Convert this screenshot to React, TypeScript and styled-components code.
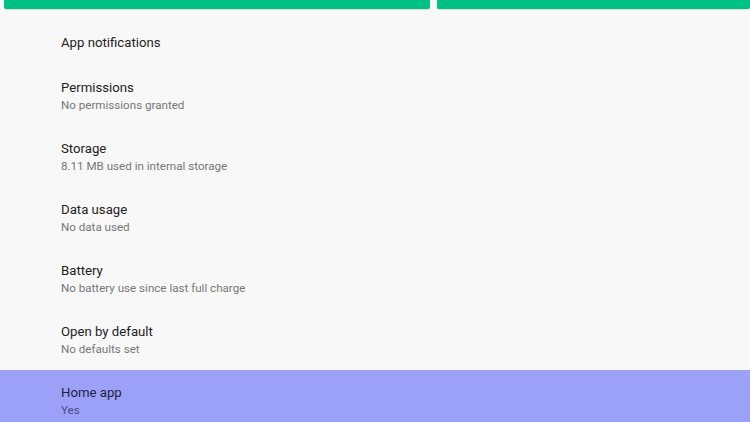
import React, { FC } from 'react';
import styled, { createGlobalStyle } from 'styled-components';

const GlobalStyle = createGlobalStyle`
  html, body {
    margin: 0;
    padding: 0;
    background: #f8f8f8;
    font-family: Roboto, 'Noto Sans', sans-serif;
    overflow: hidden;
  }
`;

const Page = styled.div`
  width: 750px;
  height: 422px;
  display: flex;
  flex-direction: column;
  background: #f8f8f8;
  overflow: hidden;
`;

const ButtonBar = styled.div`
  display: flex;
  gap: 7px;
  padding-left: 4px;
  height: 9px;
`;

const ActionButton = styled.div<{ $grow: number }>`
  flex: ${(p) => p.$grow};
  height: 9px;
  background: #00c084;
  border-radius: 0 0 2px 2px;
  box-shadow: 0 1px 1px rgba(0, 0, 0, 0.12);
`;

const List = styled.div`
  display: flex;
  flex-direction: column;
  margin-top: 9px;
`;

const Row = styled.div<{ $active?: boolean; $single?: boolean }>`
  display: flex;
  flex-direction: column;
  height: ${(p) => (p.$single ? '47px' : '61px')};
  padding: ${(p) => (p.$single ? '1px' : '14px')} 61px 0;
  box-sizing: border-box;
  justify-content: ${(p) => (p.$single ? 'center' : 'flex-start')};
  background: ${(p) => (p.$active ? '#9ca1f8' : 'transparent')};
`;

const Title = styled.div<{ $active?: boolean }>`
  font-size: 13.2px;
  line-height: 17px;
  color: ${(p) => (p.$active ? '#1c1f44' : '#222')};
`;

const Subtitle = styled.div<{ $active?: boolean }>`
  margin-top: 1px;
  font-size: 11.6px;
  line-height: 17px;
  color: ${(p) => (p.$active ? '#484c8c' : '#777')};
`;

type Item = { title: string; subtitle?: string; active?: boolean };

const items: Item[] = [
  { title: 'Permissions', subtitle: 'No permissions granted' },
  { title: 'Storage', subtitle: '8.11 MB used in internal storage' },
  { title: 'Data usage', subtitle: 'No data used' },
  { title: 'Battery', subtitle: 'No battery use since last full charge' },
  { title: 'Open by default', subtitle: 'No defaults set' },
  { title: 'Home app', subtitle: 'Yes', active: true },
];

const App: FC = () => (
  <Page>
    <GlobalStyle />
    <ButtonBar>
      <ActionButton $grow={426} />
      <ActionButton $grow={313} />
    </ButtonBar>
    <List>
      <Row $single>
        <Title>App notifications</Title>
      </Row>
      {items.map((it) => (
        <Row key={it.title} $active={it.active}>
          <Title $active={it.active}>{it.title}</Title>
          <Subtitle $active={it.active}>{it.subtitle}</Subtitle>
        </Row>
      ))}
    </List>
  </Page>
);

export default App;
